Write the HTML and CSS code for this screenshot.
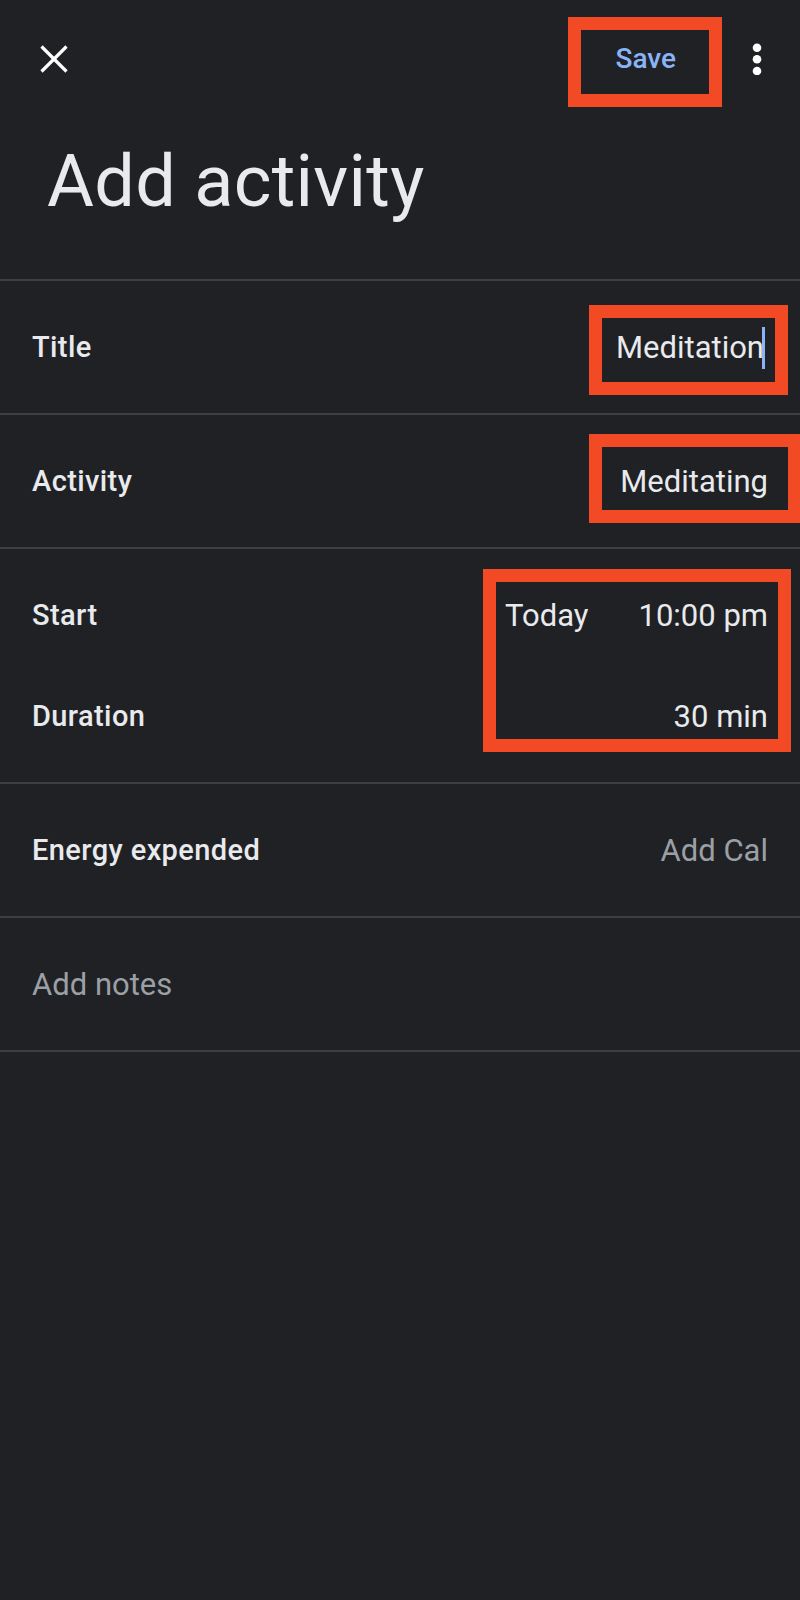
FILE: index.html
```html
<!DOCTYPE html>
<html lang="en">
<head>
    <meta charset="UTF-8">
    <meta name="viewport" content="width=device-width, initial-scale=1.0">
    <title>Add activity</title>
    <link rel="stylesheet" href="styles.css">
</head>
<body>

<div class="app">
    <div class="toolbar">
        <svg class="close-icon" width="28" height="28" viewBox="0 0 28 28">
            <line x1="1.5" y1="1.5" x2="26.5" y2="26.5" stroke="#ffffff" stroke-width="3.2"/>
            <line x1="26.5" y1="1.5" x2="1.5" y2="26.5" stroke="#ffffff" stroke-width="3.2"/>
        </svg>
        <div class="spacer"></div>
        <span class="save">Save</span>
        <svg class="more-icon" width="10" height="32" viewBox="0 0 10 32">
            <circle cx="5" cy="4.7" r="4.3" fill="#ffffff"/>
            <circle cx="5" cy="16.3" r="4.3" fill="#ffffff"/>
            <circle cx="5" cy="28" r="4.3" fill="#ffffff"/>
        </svg>
        <div class="mark mark-save"></div>
    </div>

    <div class="heading">
        <h1>Add activity</h1>
    </div>

    <div class="row">
        <span class="label">Title</span>
        <span class="value">Meditation<span class="cursor"></span></span>
        <div class="mark mark-title"></div>
    </div>

    <div class="row">
        <span class="label">Activity</span>
        <span class="value">Meditating</span>
        <div class="mark mark-activity"></div>
    </div>

    <div class="row row-time">
        <div class="line">
            <span class="label">Start</span>
            <div class="time-group">
                <span class="value">Today</span>
                <span class="value">10:00 pm</span>
            </div>
        </div>
        <div class="line">
            <span class="label">Duration</span>
            <span class="value">30 min</span>
        </div>
        <div class="mark mark-time"></div>
    </div>

    <div class="row">
        <span class="label">Energy expended</span>
        <span class="value hint">Add Cal</span>
    </div>

    <div class="row">
        <span class="value hint">Add notes</span>
    </div>
</div>

</body>
</html>
```

FILE: styles.css
```css
body {
    margin: 0;
    background-color: #202124;
    font-family: Roboto, "Liberation Sans", sans-serif;
    color: #e8eaed;
}
.app {
    width: 800px;
    min-height: 1600px;
    overflow: hidden;
    background-color: #202124;
}
.toolbar {
    position: relative;
    display: flex;
    align-items: center;
    height: 118px;
    padding: 0 38px 0 40px;
}
.close-icon {
    display: block;
}
.spacer {
    flex-grow: 1;
}
.save {
    font-size: 28px;
    line-height: 28px;
    font-weight: 500;
    color: #8ab4f8;
    margin-right: 76px;
}
.more-icon {
    display: block;
}
.heading {
    height: 161px;
    padding-left: 47px;
    border-bottom: 2px solid #3c4043;
}
.heading h1 {
    margin: 0;
    padding-top: 28px;
    font-size: 72px;
    line-height: 72px;
    font-weight: 400;
    letter-spacing: 0.3px;
    color: #e8eaed;
}
.row {
    position: relative;
    display: flex;
    align-items: center;
    justify-content: space-between;
    height: 132px;
    padding: 0 32px;
    border-bottom: 2px solid #3c4043;
}
.label {
    font-size: 29px;
    line-height: 50px;
    font-weight: 500;
    letter-spacing: 0.4px;
    color: #e8eaed;
}
.value {
    display: flex;
    align-items: center;
    font-size: 31px;
    line-height: 50px;
    padding-top: 2px;
    color: #e8eaed;
}
.value.hint {
    color: #9aa0a6;
}
.cursor {
    display: inline-block;
    width: 3px;
    height: 42px;
    margin-left: -2px;
    margin-right: 3px;
    background-color: #8ab4f8;
}
.row-time {
    flex-direction: column;
    align-items: stretch;
    justify-content: flex-start;
    gap: 51px;
    height: 151px;
    padding-top: 41px;
    padding-bottom: 41px;
}
.line {
    display: flex;
    justify-content: space-between;
    align-items: center;
    height: 50px;
}
.time-group {
    display: flex;
    gap: 50px;
}
/* red highlight boxes drawn over the screen */
.mark {
    position: absolute;
    box-sizing: border-box;
    border: 13px solid #f24a25;
}
.mark-save {
    top: 17px;
    left: 568px;
    width: 154px;
    height: 90px;
}
.mark-title {
    top: 24px;
    left: 589px;
    width: 199px;
    height: 90px;
}
.mark-activity {
    top: 19px;
    left: 589px;
    width: 212px;
    height: 89px;
}
.mark-time {
    top: 20px;
    left: 483px;
    width: 308px;
    height: 183px;
}
```
